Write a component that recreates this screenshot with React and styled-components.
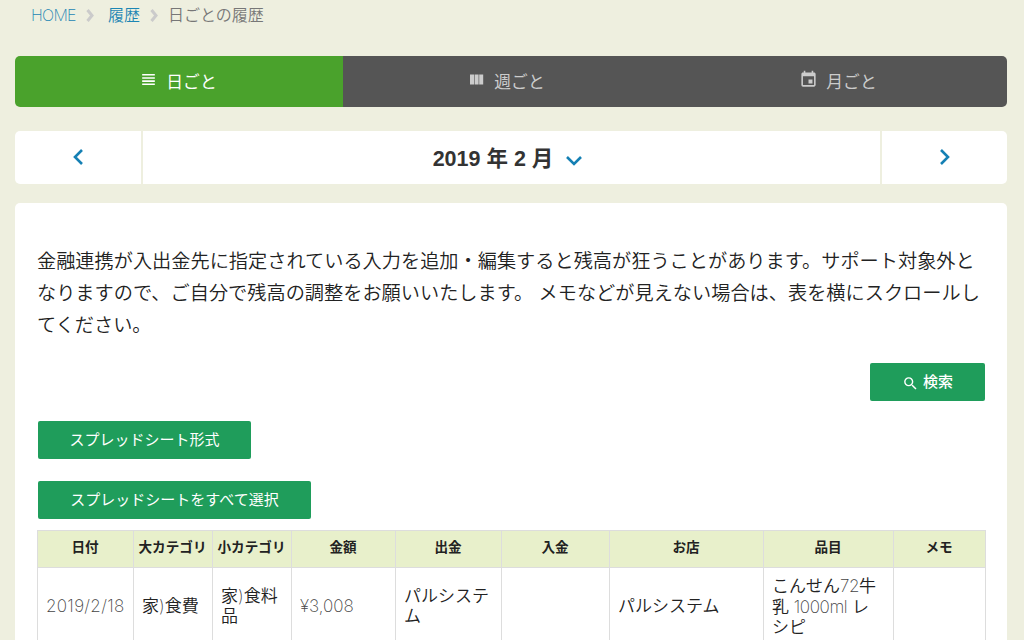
import styled, { createGlobalStyle } from 'styled-components';
import { MdEvent, MdSearch, MdViewHeadline } from 'react-icons/md';

const GlobalStyle = createGlobalStyle`
  * {
    box-sizing: border-box;
  }
  body {
    margin: 0;
    height: 640px;
    overflow: hidden;
    background: #eeefdf;
    color: #222;
    font-family: "Liberation Sans", "Noto Sans CJK JP", sans-serif;
  }
`

const Page = styled.div`
  width: 1024px;
  height: 640px;
  overflow: hidden;
  padding: 0 17px 0 15px;
`

const Breadcrumb = styled.nav`
  display: flex;
  align-items: center;
  height: 56px;
  padding: 0 0 27px 16px;
  font-size: 16px;
  line-height: 30px;
  color: #777;
  font-family: Inter, "Noto Sans CJK JP", sans-serif;
  font-weight: 350;
`

const Crumb = styled.a`
  color: #1c86b4;
  width: ${(props) => props.$width}px;
  white-space: nowrap;
`

const HomeCrumb = styled(Crumb)`
  font-weight: 200;
  letter-spacing: -0.7px;
`

const CrumbArrow = styled.svg`
  width: 8px;
  height: 13px;
  margin: 1px ${(props) => props.$gap}px 0 10px;
  fill: none;
  stroke: #cbcbcb;
  stroke-width: 3;
`

const Tabs = styled.div`
  display: grid;
  grid-template-columns: 328px 328px 1fr;
  height: 51px;
  border-radius: 5px;
  overflow: hidden;
`

const Tab = styled.div`
  display: flex;
  align-items: center;
  justify-content: center;
  gap: 8px;
  padding: 2px 1px 0 0;
  background: ${(props) => (props.$active ? '#4aa22c' : '#555')};
  color: ${(props) => (props.$active ? '#fff' : '#ccc')};
  font-size: 16.8px;
  line-height: 49px;
  svg {
    width: 19px;
    height: 19px;
    margin: 0 0 6px -1px;
  }
`

const Pager = styled.div`
  display: grid;
  grid-template-columns: 126px 1fr 125px;
  gap: 2px;
  height: 53px;
  margin-top: 24px;
  border-radius: 5px;
  overflow: hidden;
`

const PagerCell = styled.div`
  display: flex;
  align-items: center;
  justify-content: center;
  padding-bottom: 1px;
  background: #fff;
`

const Month = styled(PagerCell)`
  padding: 0 8px 2px 0;
  color: #333;
  font-size: 21.5px;
  font-weight: bold;
`

const Chevron = styled.svg`
  width: ${(props) => props.$w}px;
  height: ${(props) => props.$h}px;
  margin: ${(props) => props.$margin || '0'};
  fill: none;
  stroke: #1580b4;
  stroke-width: 2.6;
`

const Panel = styled.main`
  margin-top: 19px;
  padding: 43px 21px 0 22px;
  height: 460px;
  border-radius: 5px;
  background: #fff;
`

const Notice = styled.p`
  margin: 0;
  font-size: 19.2px;
  line-height: 32px;
  font-weight: 350;
`

const Row = styled.div`
  display: flex;
  justify-content: ${(props) => (props.$end ? 'flex-end' : 'flex-start')};
  margin-top: ${(props) => props.$top}px;
  padding: 0 1px;
`

const Button = styled.button`
  display: flex;
  align-items: center;
  justify-content: center;
  gap: 4px;
  width: ${(props) => props.$width}px;
  height: 38px;
  padding: 0;
  border: 0;
  border-radius: 2px;
  background: #1f9d5b;
  color: #fff;
  font: ${(props) => (props.$bold ? 500 : 400)} 15px/38px "Liberation Sans", "Noto Sans CJK JP", sans-serif;
  svg {
    margin: 2px 0 0 0;
  }
`

const Table = styled.table`
  width: 949px;
  margin-top: 11px;
  border-collapse: collapse;
  table-layout: fixed;
`

const Th = styled.th`
  width: ${(props) => props.$width}px;
  height: 37px;
  padding: 0 1px 2px 0;
  border: 1px solid #ddd;
  background: #e8f0cb;
  font-size: 13.6px;
  line-height: 20px;
  white-space: nowrap;
`

const Td = styled.td`
  height: 78px;
  padding: 0 8px;
  border: 1px solid #ddd;
  font-size: 17px;
  line-height: 20px;
  font-weight: 350;
`

const Thin = styled.span`
  color: #444;
  font-family: Inter, sans-serif;
  font-weight: 200;
  font-size: 17px;
  letter-spacing: ${(props) => props.$spacing || 0}px;
`

const columns = [
  ['日付', 96],
  ['大カテゴリ', 79],
  ['小カテゴリ', 79],
  ['金額', 104],
  ['出金', 106],
  ['入金', 108],
  ['お店', 154],
  ['品目', 130],
  ['メモ', 92],
]

const BreadcrumbArrow = ({ gap }) => (
  <CrumbArrow $gap={gap} viewBox="0 0 8 13">
    <path d="M1.5 1 6 6.5 1.5 12" />
  </CrumbArrow>
)

const WeekIcon = () => (
  <svg viewBox="0 0 19 19" fill="currentColor">
    <path d="M3 4.5h4v10H3zM7.6 4.5h4v10h-4zM12.2 4.5h4v10h-4z" />
  </svg>
)

const App = () => {
  return (
    <Page>
      <GlobalStyle />
      <Breadcrumb>
        <HomeCrumb $width={45}>HOME</HomeCrumb>
        <BreadcrumbArrow gap={14} />
        <Crumb $width={32}>履歴</Crumb>
        <BreadcrumbArrow gap={10} />
        <span>日ごとの履歴</span>
      </Breadcrumb>

      <Tabs>
        <Tab $active><MdViewHeadline />日ごと</Tab>
        <Tab><WeekIcon />週ごと</Tab>
        <Tab><MdEvent />月ごと</Tab>
      </Tabs>

      <Pager>
        <PagerCell>
          <Chevron $w={10} $h={16} viewBox="0 0 10 16"><path d="M9 1 2 8l7 7" /></Chevron>
        </PagerCell>
        <Month>
          2019 年 2 月
          <Chevron $w={16} $h={10} $margin="8px 0 0 13px" viewBox="0 0 16 10"><path d="m1 1 7 7 7-7" /></Chevron>
        </Month>
        <PagerCell>
          <Chevron $w={10} $h={16} viewBox="0 0 10 16"><path d="m1 1 7 7-7 7" /></Chevron>
        </PagerCell>
      </Pager>

      <Panel>
        <Notice>
          金融連携が入出金先に指定されている入力を追加・編集すると残高が狂うことがあります。サポート対象外となりますので、ご自分で残高の調整をお願いいたします。 メモなどが見えない場合は、表を横にスクロールしてください。
        </Notice>
        <Row $end $top={21}>
          <Button $bold $width={115}><MdSearch size={17} />検索</Button>
        </Row>
        <Row $top={20}>
          <Button $width={213}>スプレッドシート形式</Button>
        </Row>
        <Row $top={22}>
          <Button $width={273}>スプレッドシートをすべて選択</Button>
        </Row>
        <Table>
          <thead>
            <tr>
              {columns.map(([label, width]) => (
                <Th key={label} $width={width}>{label}</Th>
              ))}
            </tr>
          </thead>
          <tbody>
            <tr>
              <Td><Thin $spacing={0.3}>2019/2/18</Thin></Td>
              <Td>家<Thin>)</Thin>食費</Td>
              <Td>家<Thin>)</Thin>食料品</Td>
              <Td><Thin>¥3,008</Thin></Td>
              <Td>パルシステム</Td>
              <Td />
              <Td>パルシステム</Td>
              <Td>こんせん<Thin $spacing={-0.4}>72</Thin>牛乳 <Thin $spacing={-0.4}>1000ml</Thin> レシピ</Td>
              <Td />
            </tr>
          </tbody>
        </Table>
      </Panel>
    </Page>
  )
}

export default App;
